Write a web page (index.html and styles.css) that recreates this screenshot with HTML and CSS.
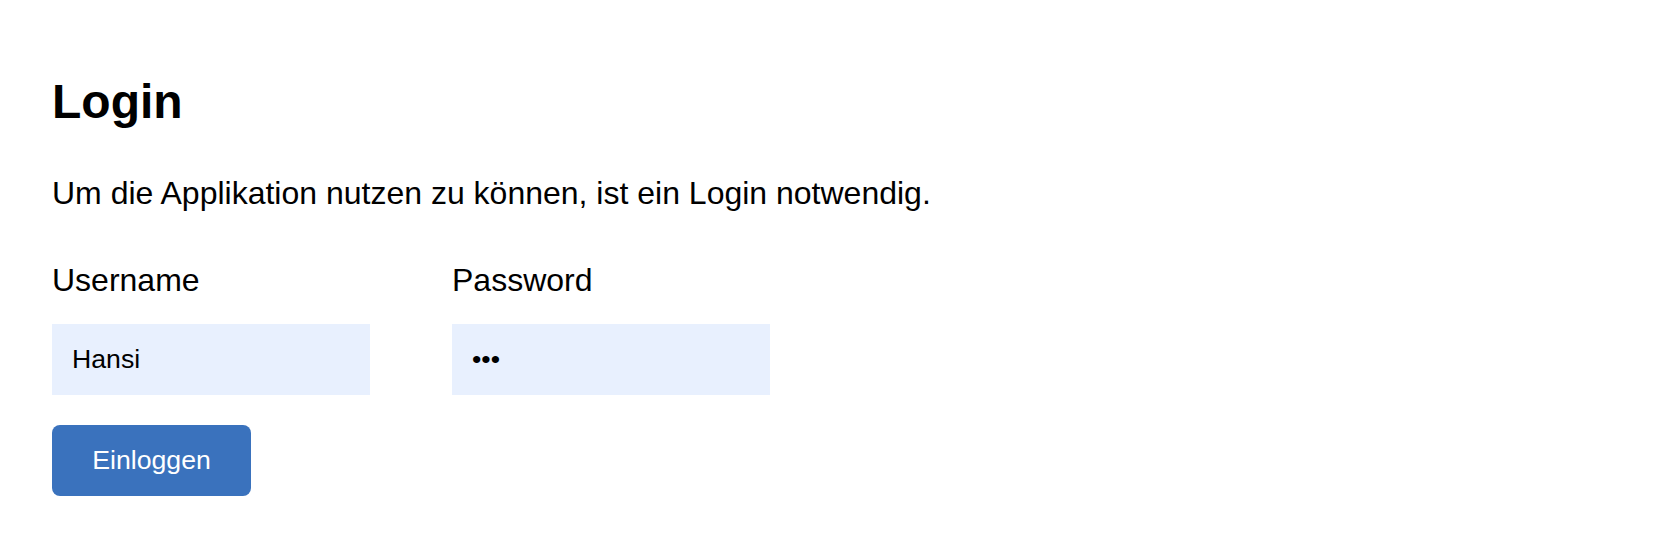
FILE: index.html
```html
<!DOCTYPE html>
<html lang="de">
<head>
<meta charset="utf-8">
<title>Login</title>
<link rel="stylesheet" href="styles.css">
</head>
<body>
<main class="page">
  <h1 class="title">Login</h1>
  <p class="intro">Um die Applikation nutzen zu können, ist ein Login notwendig.</p>
  <form class="login-form">
    <div class="fields">
      <div class="field">
        <label class="field-label" for="username">Username</label>
        <input class="field-input" id="username" type="text" value="Hansi">
      </div>
      <div class="field">
        <label class="field-label" for="password">Password</label>
        <input class="field-input" id="password" type="password" value="abc">
      </div>
    </div>
    <button class="submit" type="button">Einloggen</button>
  </form>
</main>
</body>
</html>
```

FILE: styles.css
```css
html, body {
  margin: 0;
  padding: 0;
  background: #ffffff;
}

body {
  font-family: "Liberation Sans", Arial, Helvetica, sans-serif;
  color: #000000;
}

.page {
  padding: 74px 52px 0 52px;
}

.title {
  margin: 0;
  font-size: 48px;
  line-height: 56px;
  font-weight: 700;
}

.intro {
  margin: 43px 0 0 0;
  font-size: 32px;
  line-height: 40px;
}

.login-form {
  margin-top: 47px;
  display: flex;
  flex-direction: column;
  align-items: flex-start;
}

.fields {
  display: flex;
  gap: 82px;
}

.field {
  display: flex;
  flex-direction: column;
  width: 318px;
}

.field-label {
  font-size: 32px;
  line-height: 40px;
}

.field-input {
  margin-top: 24px;
  box-sizing: border-box;
  width: 318px;
  height: 71px;
  border: 0;
  outline: none;
  padding: 0 20px;
  background: #e8f0fe;
  font-family: "Liberation Sans", Arial, Helvetica, sans-serif;
  font-size: 26.67px;
  color: #000000;
}

.submit {
  margin-top: 30px;
  box-sizing: border-box;
  height: 71px;
  width: 199px;
  padding: 0;
  border: 0;
  border-radius: 8px;
  background: #3a72bd;
  color: #ffffff;
  font-family: "Liberation Sans", Arial, Helvetica, sans-serif;
  font-size: 26.67px;
  cursor: pointer;
}
```
